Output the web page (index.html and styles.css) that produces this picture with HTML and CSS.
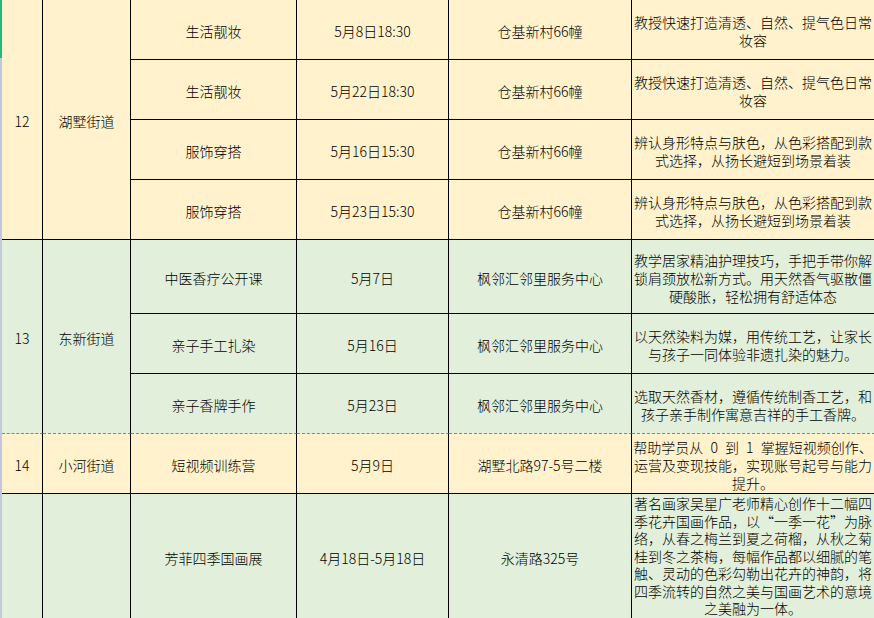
FILE: index.html
```html
<!DOCTYPE html>
<html lang="zh-CN">
<head>
<meta charset="utf-8">
<title>活动安排</title>
<link rel="stylesheet" href="styles.css">
</head>
<body>
<div class="sheet">
  <div class="strip"></div>
  <table class="grid">
    <colgroup>
      <col class="c-no"><col class="c-street"><col class="c-name"><col class="c-time"><col class="c-place"><col class="c-desc">
    </colgroup>
    <tbody>
      <tr class="yellow h60">
        <td rowspan="4">12</td>
        <td rowspan="4">湖墅街道</td>
        <td>生活靓妆</td>
        <td>5月8日18:30</td>
        <td>仓基新村66幢</td>
        <td class="desc">教授快速打造清透、自然、提气色日常<br>妆容</td>
      </tr>
      <tr class="yellow h60">
        <td>生活靓妆</td>
        <td>5月22日18:30</td>
        <td>仓基新村66幢</td>
        <td class="desc">教授快速打造清透、自然、提气色日常<br>妆容</td>
      </tr>
      <tr class="yellow h60">
        <td>服饰穿搭</td>
        <td>5月16日15:30</td>
        <td>仓基新村66幢</td>
        <td class="desc">辨认身形特点与肤色，从色彩搭配到款<br>式选择，从扬长避短到场景着装</td>
      </tr>
      <tr class="yellow h60">
        <td>服饰穿搭</td>
        <td>5月23日15:30</td>
        <td>仓基新村66幢</td>
        <td class="desc">辨认身形特点与肤色，从色彩搭配到款<br>式选择，从扬长避短到场景着装</td>
      </tr>
      <tr class="green h74">
        <td rowspan="3" class="brk">13</td>
        <td rowspan="3" class="brk">东新街道</td>
        <td>中医香疗公开课</td>
        <td>5月7日</td>
        <td>枫邻汇邻里服务中心</td>
        <td class="desc">教学居家精油护理技巧，手把手带你解<br>锁肩颈放松新方式。用天然香气驱散僵<br>硬酸胀，轻松拥有舒适体态</td>
      </tr>
      <tr class="green h60">
        <td>亲子手工扎染</td>
        <td>5月16日</td>
        <td>枫邻汇邻里服务中心</td>
        <td class="desc">以天然染料为媒，用传统工艺，让家长<br>与孩子一同体验非遗扎染的魅力。</td>
      </tr>
      <tr class="green h60">
        <td class="brk">亲子香牌手作</td>
        <td class="brk">5月23日</td>
        <td class="brk">枫邻汇邻里服务中心</td>
        <td class="desc brk">选取天然香材，遵循传统制香工艺，和<br>孩子亲手制作寓意吉祥的手工香牌。</td>
      </tr>
      <tr class="yellow h60">
        <td>14</td>
        <td>小河街道</td>
        <td>短视频训练营</td>
        <td>5月9日</td>
        <td>湖墅北路97-5号二楼</td>
        <td class="desc wide-space">帮助学员从 0 到 1 掌握短视频创作、<br>运营及变现技能，实现账号起号与能力<br>提升。</td>
      </tr>
      <tr class="green h126">
        <td></td>
        <td></td>
        <td>芳菲四季国画展</td>
        <td>4月18日-5月18日</td>
        <td>永清路325号</td>
        <td class="desc tight">著名画家吴星广老师精心创作十二幅四<br>季花卉国画作品，以“一季一花”为脉<br>络，从春之梅兰到夏之荷榴，从秋之菊<br>桂到冬之茶梅，每幅作品都以细腻的笔<br>触、灵动的色彩勾勒出花卉的神韵，将<br>四季流转的自然之美与国画艺术的意境<br>之美融为一体。</td>
      </tr>
    </tbody>
  </table>
</div>
</body>
</html>
```
FILE: styles.css
```css
html, body {
  margin: 0;
  padding: 0;
  background: #ffffff;
  overflow: hidden;
}

.sheet {
  display: flex;
  align-items: stretch;
  width: 875px;
  height: 618px;
  overflow: hidden;
}

.strip {
  flex: 0 0 2px;
  width: 2px;
  background: linear-gradient(to bottom, #2db47a 0, #2db47a 58px, #c2c7d9 58px, #c2c7d9 100%);
}

.grid {
  flex: 0 0 873px;
  width: 873px;
  table-layout: fixed;
  border-collapse: separate;
  border-spacing: 0;
  align-self: flex-start;
  font-family: "Noto Sans CJK SC", "Noto Sans", sans-serif;
  font-size: 14px;
  font-weight: 300;
  line-height: 18px;
  color: #000;
}

.c-no { width: 41px; }
.c-street { width: 88px; }
.c-name { width: 166px; }
.c-time { width: 152px; }
.c-place { width: 183px; }
.c-desc { width: 243px; }

.grid td {
  border-right: 1px solid #000;
  border-bottom: 1px solid #000;
  padding: 3px 1px 0;
  text-align: center;
  vertical-align: middle;
  white-space: nowrap;
  overflow: visible;
}

.yellow td { background: #fff2cc; }
.green td { background: #e2efda; }

.grid td.brk {
  border-bottom: 1px dashed #858585;
}

.grid td.wide-space {
  word-spacing: 4px;
}

.grid td.tight {
  line-height: 17.6px;
  padding-top: 0;
}

.h60 { height: 60px; }
.h74 { height: 74px; }
.h126 { height: 126px; }
```
